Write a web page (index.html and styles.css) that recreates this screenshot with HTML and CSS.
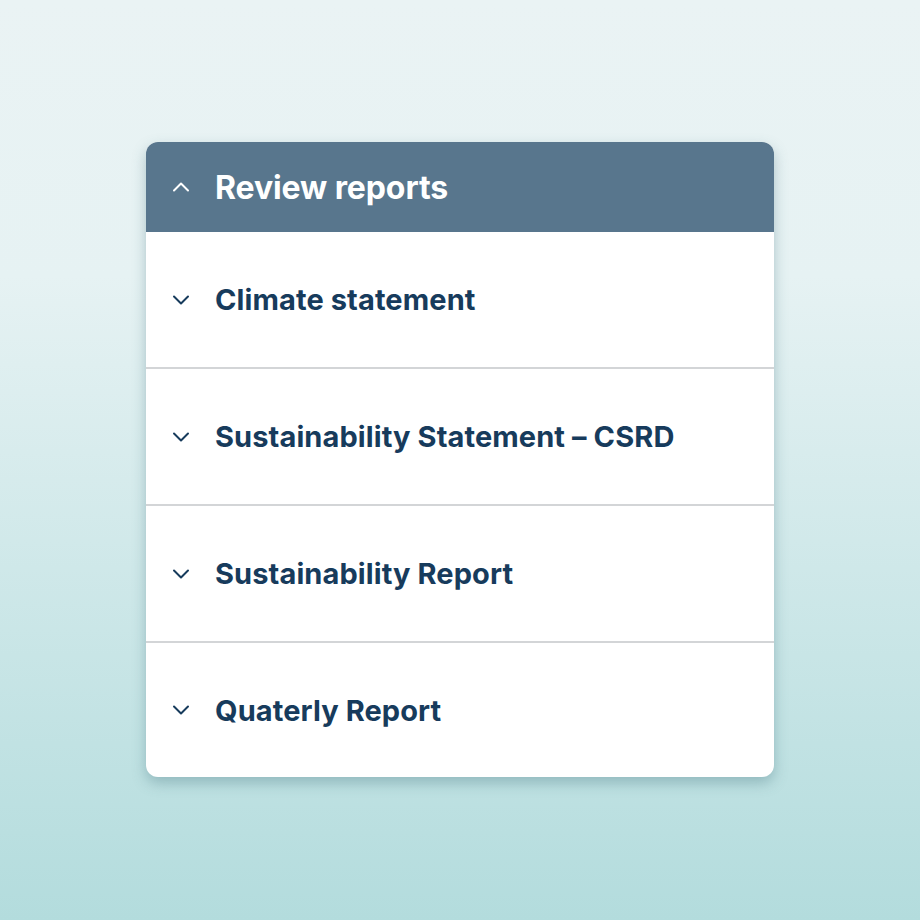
FILE: index.html
```html
<!DOCTYPE html>
<html>
<head>
<meta charset="utf-8">
<link rel="stylesheet" href="styles.css">
</head>
<body>
<div class="page">
  <div class="card">
    <div class="header">
      <svg class="chev" viewBox="0 0 18 10" width="18" height="10"><path d="M2 8.5 L9 1.5 L16 8.5" fill="none" stroke="#ffffff" stroke-width="2" stroke-linecap="round" stroke-linejoin="round"/></svg>
      <span class="title">Review reports</span>
    </div>
    <div class="row">
      <svg class="chev" viewBox="0 0 18 10" width="18" height="10"><path d="M2 1.5 L9 8.5 L16 1.5" fill="none" stroke="#173b5c" stroke-width="2" stroke-linecap="round" stroke-linejoin="round"/></svg>
      <span class="label">Climate statement</span>
    </div>
    <div class="row">
      <svg class="chev" viewBox="0 0 18 10" width="18" height="10"><path d="M2 1.5 L9 8.5 L16 1.5" fill="none" stroke="#173b5c" stroke-width="2" stroke-linecap="round" stroke-linejoin="round"/></svg>
      <span class="label">Sustainability Statement – CSRD</span>
    </div>
    <div class="row">
      <svg class="chev" viewBox="0 0 18 10" width="18" height="10"><path d="M2 1.5 L9 8.5 L16 1.5" fill="none" stroke="#173b5c" stroke-width="2" stroke-linecap="round" stroke-linejoin="round"/></svg>
      <span class="label">Sustainability Report</span>
    </div>
    <div class="row last">
      <svg class="chev" viewBox="0 0 18 10" width="18" height="10"><path d="M2 1.5 L9 8.5 L16 1.5" fill="none" stroke="#173b5c" stroke-width="2" stroke-linecap="round" stroke-linejoin="round"/></svg>
      <span class="label">Quaterly Report</span>
    </div>
  </div>
</div>
</body>
</html>
```
FILE: styles.css
```css
* { box-sizing: border-box; }
html, body { margin: 0; padding: 0; }
body {
  width: 920px;
  height: 920px;
  background: linear-gradient(180deg, #eaf3f4 0%, #e6f2f3 30%, #b3dcdd 100%);
  font-family: Inter, "Open Sans", sans-serif;
}
.page {
  padding-top: 142px;
  padding-left: 146px;
}
.card {
  width: 628px;
  background: #ffffff;
  border-radius: 12px;
  overflow: hidden;
  box-shadow: 0 6px 14px rgba(60, 110, 120, 0.35);
}
.header {
  height: 90px;
  background: #58768d;
  display: flex;
  align-items: center;
  padding-left: 26px;
  gap: 25px;
}
.title {
  color: #ffffff;
  font-size: 32px;
  font-weight: 700;
  letter-spacing: -0.1px;
}
.row {
  height: 137px;
  display: flex;
  align-items: center;
  padding-left: 26px;
  gap: 25px;
  border-bottom: 2px solid #d3d5d7;
}
.row.last { border-bottom: none; height: 134px; }
.label {
  color: #173b5c;
  font-size: 29px;
  font-weight: 700;
  letter-spacing: 0.1px;
}
.chev { flex: none; }
```
